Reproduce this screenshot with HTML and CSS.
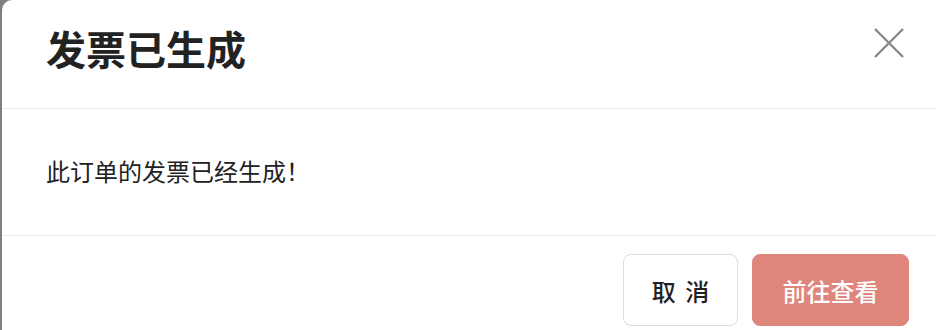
FILE: index.html
```html
<!DOCTYPE html>
<html>

<head>
    <title>发票已生成</title>
    <link rel="stylesheet" href="styles.css">
</head>

<body>
    <div class="modalDialog">
        <div class="modalHeader">
            <h4 class="modalTitle">发票已生成</h4>
            <button class="closeButton" aria-label="关闭">
                <svg width="30" height="30" viewBox="0 0 30 30">
                    <path d="M1 1 L29 29 M29 1 L1 29" stroke="#888" stroke-width="2.4" fill="none" />
                </svg>
            </button>
        </div>
        <div class="modalBody">
            <p class="message">此订单的发票已经生成！</p>
        </div>
        <div class="modalFooter">
            <button class="cancelButton">取 消</button>
            <button class="goButton">前往查看</button>
        </div>
    </div>
</body>

</html>
```

FILE: styles.css
```css
body {
    margin: 0;
    background-color: #808080;
    font-family: "Noto Sans CJK SC", "Noto Sans", sans-serif;
    color: #222;
    overflow: hidden;
}
.modalDialog {
    margin-left: 2px;
    width: 960px;
    height: 330px;
    background-color: #fff;
    border-top-left-radius: 10px;
}
.modalHeader {
    display: flex;
    align-items: center;
    justify-content: space-between;
    height: 96px;
    padding: 0 32px 12px 44px;
    border-bottom: 1px solid #ececec;
    box-sizing: content-box;
    width: 858px;
}
.modalTitle {
    margin: 0;
    font-size: 40px;
    font-weight: bold;
    line-height: 48px;
    color: #222;
}
.closeButton {
    align-self: flex-start;
    margin-top: 28px;
    padding: 0;
    border: none;
    background: none;
    width: 30px;
    height: 30px;
}
.modalBody {
    display: flex;
    align-items: center;
    height: 126px;
    padding: 0 44px;
    border-bottom: 1px solid #ececec;
}
.message {
    margin: 0 0 2px;
    font-size: 24px;
    line-height: 32px;
    color: #222;
}
.modalFooter {
    display: flex;
    gap: 14px;
    padding: 18px 0 0 621px;
}
.cancelButton,
.goButton {
    height: 72px;
    border-radius: 8px;
    font-family: "Noto Sans CJK SC", "Noto Sans", sans-serif;
    font-size: 24px;
    font-weight: 500;
}
.cancelButton {
    width: 115px;
    background-color: #fff;
    border: 1px solid #dcdcdc;
    color: #222;
    word-spacing: 4px;
}
.goButton {
    width: 157px;
    background-color: #e0857c;
    border: 1px solid #e0857c;
    color: #fff;
}
```
